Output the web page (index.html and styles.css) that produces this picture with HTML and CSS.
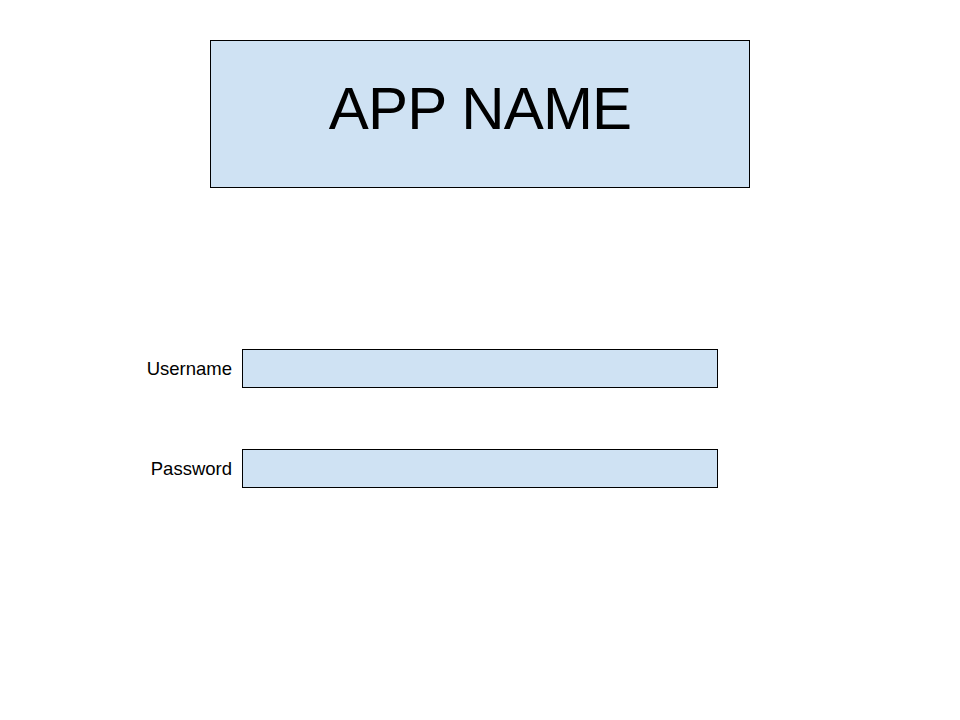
FILE: index.html
```html
<!DOCTYPE html>
<html>
<head>
<meta charset="utf-8">
<link rel="stylesheet" href="styles.css">
</head>
<body>
<div class="page">
  <header class="banner"><h1 class="title">APP NAME</h1></header>
  <form class="login">
    <label class="label" for="u">Username</label>
    <input class="field" id="u" type="text">
    <label class="label" for="p">Password</label>
    <input class="field" id="p" type="password">
  </form>
</div>
</body>
</html>
```
FILE: styles.css
```css
html, body { margin: 0; padding: 0; background: #ffffff; }
body { font-family: "Liberation Sans", Arial, sans-serif; color: #000; }
.page { width: 960px; height: 720px; padding-top: 40px; box-sizing: border-box; }
.banner {
  margin-left: 210px;
  width: 540px;
  height: 148px;
  box-sizing: border-box;
  border: 1px solid #000;
  background: #cfe2f3;
  display: flex;
  justify-content: center;
  align-items: flex-start;
}
.title {
  margin: 0;
  padding-top: 38px;
  font-size: 60px;
  font-weight: normal;
  line-height: 1;
  letter-spacing: -0.8px;
}
.login {
  margin-top: 161px;
  display: grid;
  grid-template-columns: 232px 476px;
  column-gap: 10px;
  row-gap: 61px;
  align-items: center;
}
.label {
  justify-self: end;
  font-size: 18.5px;
  line-height: 1;
  padding-top: 2px;
}
.field {
  width: 476px;
  height: 39px;
  box-sizing: border-box;
  margin: 0;
  border: 1px solid #000;
  background: #cfe2f3;
  padding: 0 6px;
  outline: none;
  border-radius: 0;
}
```
